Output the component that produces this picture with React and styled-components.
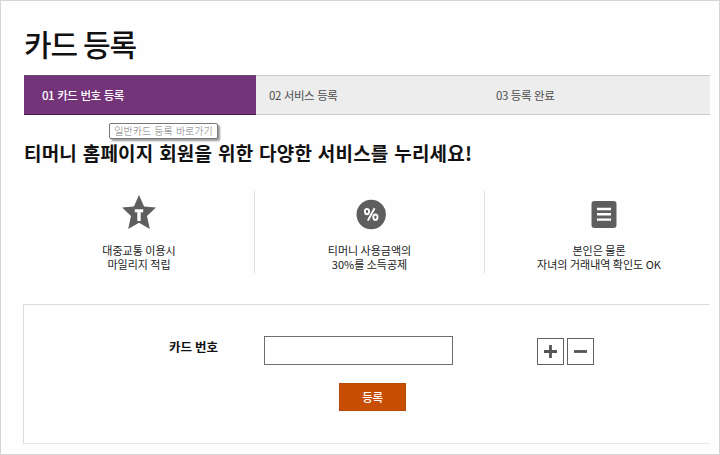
import React from 'react';
import styled, { createGlobalStyle } from 'styled-components';

const GlobalStyle = createGlobalStyle`
  * { box-sizing: border-box; }
  body {
    margin: 0;
    background: #fff;
    font-family: "Noto Sans CJK KR", "Noto Sans", sans-serif;
    color: #111;
  }
`;

const Page = styled.main`
  width: 720px;
  height: 455px;
  padding: 25px 9px 0 23px;
  border: 1px solid #d6d6d6;
  background: #fefefe;
  overflow: hidden;
`;

const Title = styled.h1`
  margin: 0;
  height: 49px;
  font-size: 30px;
  line-height: 35px;
  font-weight: 500;
  letter-spacing: -1px;
  white-space: nowrap;
`;

const Steps = styled.ol`
  display: grid;
  grid-template-columns: 232px 227px 1fr;
  width: 686px;
  height: 40px;
  margin: 0;
  padding: 0;
  list-style: none;
`;

const Step = styled.li`
  position: relative;
  padding-left: ${(p) => (p.$active ? 18 : 13)}px;
  border-top: 1px solid ${(p) => (p.$active ? '#6b4a70' : '#c9cccb')};
  border-bottom: 1px solid ${(p) => (p.$active ? '#451a4c' : '#c9cccb')};
  background: ${(p) => (p.$active ? '#74347a' : '#ededed')};
  color: ${(p) => (p.$active ? '#fff' : '#4c4c4c')};
  font-size: 11.5px;
  line-height: 38px;
  font-weight: ${(p) => (p.$active ? 500 : 400)};
  letter-spacing: -0.5px;
  word-spacing: 1px;
  white-space: nowrap;
`;

const Tooltip = styled.span`
  position: absolute;
  left: 85px;
  top: 47px;
  width: 109px;
  height: 16px;
  border: 1px solid #777;
  border-radius: 2px;
  background: #fff;
  box-shadow: 2px 2px 2px rgba(0, 0, 0, 0.4);
  color: #777;
  font-size: 10px;
  line-height: 14px;
  font-weight: 300;
  letter-spacing: 0;
  text-align: center;
`;

const Heading = styled.h2`
  margin: 24px 0 0;
  height: 52px;
  font-size: 19px;
  line-height: 28px;
  font-weight: 700;
  letter-spacing: 0.18px;
  word-spacing: 1.3px;
  white-space: nowrap;
`;

const Features = styled.section`
  display: grid;
  grid-template-columns: 231px 230px 1fr;
  width: 686px;
  height: 82px;
`;

const Feature = styled.div`
  display: flex;
  flex-direction: column;
  align-items: center;
  padding-left: ${(p) => p.$inset || 0}px;
  border-right: ${(p) => (p.$last ? 'none' : '1px solid #dedede')};
  text-align: center;

  svg { display: block; margin-top: 3px; }
`;

const Caption = styled.p`
  margin: 11px 0 0;
  color: #222;
  font-size: 11px;
  line-height: 14px;
  font-weight: 400;
  white-space: nowrap;
`;

const Panel = styled.form`
  width: 687px;
  height: 140px;
  margin: 31px 0 0 -1px;
  padding-top: 31px;
  border: 1px solid #dcdcdc;
  border-right-color: transparent;
  border-bottom-color: #e6e6e6;
`;

const Field = styled.div`
  display: flex;
  align-items: flex-start;
  height: 47px;
`;

const Label = styled.label`
  width: 95px;
  margin-left: 145px;
  font-size: 12.5px;
  line-height: 22px;
  font-weight: 700;
  letter-spacing: -0.1px;
  word-spacing: 0.5px;
  white-space: nowrap;
`;

const Input = styled.input`
  width: 189px;
  height: 29px;
  padding: 0 8px;
  border: 1px solid #6c6f70;
  border-radius: 0;
  background: #fff;
  outline: none;
`;

const Counter = styled.div`
  display: flex;
  gap: 3px;
  margin: 2px 0 0 84px;
`;

const SquareButton = styled.button`
  display: flex;
  align-items: center;
  justify-content: center;
  width: 27px;
  height: 27px;
  padding: 0;
  border: 1px solid #626262;
  background: #fff;
`;

const Submit = styled.button`
  display: block;
  width: 67px;
  height: 28px;
  margin-left: 315px;
  padding: 0;
  border: 1px solid #b94a06;
  background: #c84e04;
  color: #fff;
  font: 500 11.5px/26px "Noto Sans CJK KR", sans-serif;
  letter-spacing: -0.3px;
`;

const StarIcon = () => (
  <svg width="36" height="38" viewBox="0 0 36 38">
    <path d="M18 1 23.1 12.4 34.9 13.5 26 22 28.8 35 18 28.8 7.2 35 10 22 1.1 13.5 12.9 12.4Z" fill="#5e5e5e" />
    <path d="M13.8 16.8H22.2" stroke="#fff" strokeWidth="3" />
    <path d="M18 16.8V27" stroke="#fff" strokeWidth="3.4" />
  </svg>
);

const PercentIcon = () => (
  <svg width="36" height="38" viewBox="0 0 36 38">
    <g transform="translate(1.2 0)">
      <circle cx="18" cy="20.5" r="14.7" fill="#5e5e5e" />
      <g stroke="#fff" fill="none" strokeWidth="1.9">
        <ellipse cx="13.8" cy="17.6" rx="2.1" ry="2.7" />
        <ellipse cx="22.2" cy="23.2" rx="2.1" ry="2.7" />
        <path d="M21.4 14.2 14.6 26.6" />
      </g>
    </g>
  </svg>
);

const ListIcon = () => (
  <svg width="36" height="38" viewBox="0 0 36 38" overflow="visible">
    <g transform="translate(5 0)">
      <rect x="5.5" y="7" width="25" height="27" rx="3" fill="#5e5e5e" />
      <path d="M11 15H25M11 20.3H25M11 25.6H25" stroke="#fff" strokeWidth="2.4" />
    </g>
  </svg>
);

const SignIcon = ({ plus }) => (
  <svg width="13" height="13" viewBox="0 0 13 13">
    <path d={plus ? 'M0 6.5H13M6.5 0V13' : 'M0 6.5H13'} stroke="#555" strokeWidth="2.8" />
  </svg>
);

export default function App() {
  return (
    <Page>
      <GlobalStyle />
      <Title>카드 등록</Title>
      <Steps>
        <Step $active>
          01 카드 번호 등록
          <Tooltip>일반카드 등록 바로가기</Tooltip>
        </Step>
        <Step>02 서비스 등록</Step>
        <Step>03 등록 완료</Step>
      </Steps>
      <Heading>티머니 홈페이지 회원을 위한 다양한 서비스를 누리세요!</Heading>
      <Features>
        <Feature>
          <StarIcon />
          <Caption>대중교통 이용시<br />마일리지 적립</Caption>
        </Feature>
        <Feature>
          <PercentIcon />
          <Caption>티머니 사용금액의<br />30%를 소득공제</Caption>
        </Feature>
        <Feature $last $inset={3}>
          <ListIcon />
          <Caption>본인은 물론<br />자녀의 거래내역 확인도 OK</Caption>
        </Feature>
      </Features>
      <Panel onSubmit={(e) => e.preventDefault()}>
        <Field>
          <Label htmlFor="card-number">카드 번호</Label>
          <Input id="card-number" />
          <Counter>
            <SquareButton type="button" aria-label="추가"><SignIcon plus /></SquareButton>
            <SquareButton type="button" aria-label="삭제"><SignIcon /></SquareButton>
          </Counter>
        </Field>
        <Submit>등록</Submit>
      </Panel>
    </Page>
  );
}
